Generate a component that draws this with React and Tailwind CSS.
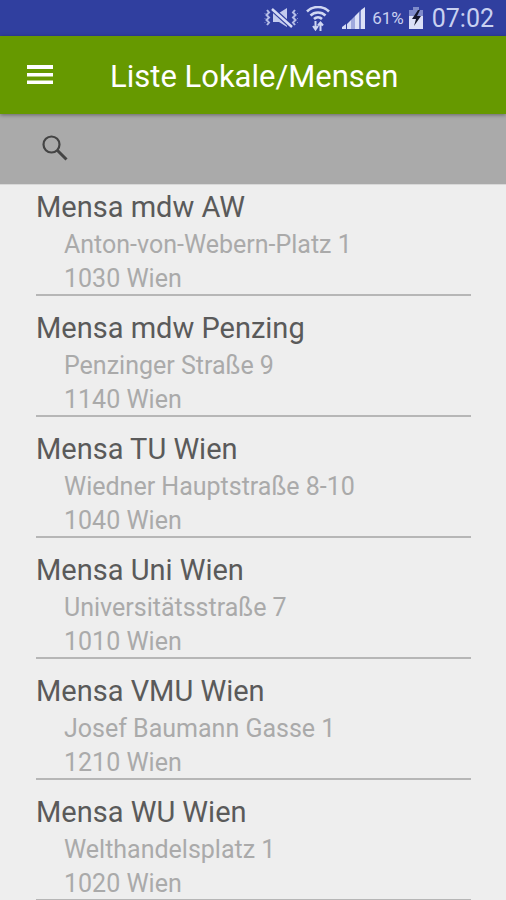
const places = [
  { name: 'Mensa mdw AW', street: 'Anton-von-Webern-Platz 1', city: '1030 Wien' },
  { name: 'Mensa mdw Penzing', street: 'Penzinger Straße 9', city: '1140 Wien' },
  { name: 'Mensa TU Wien', street: 'Wiedner Hauptstraße 8-10', city: '1040 Wien' },
  { name: 'Mensa Uni Wien', street: 'Universitätsstraße 7', city: '1010 Wien' },
  { name: 'Mensa VMU Wien', street: 'Josef Baumann Gasse 1', city: '1210 Wien' },
  { name: 'Mensa WU Wien', street: 'Welthandelsplatz 1', city: '1020 Wien' },
];

function MutedIcon() {
  return (
    <svg width="34" height="20" viewBox="0 0 34 20" fill="none" aria-hidden="true">
      <path d="M9 5h6l8-5v19l-8-5H9z" fill="#c3cbee" />
      <path d="M7 0l21 19" stroke="#303f9f" strokeWidth="5" />
      <path d="M8 1l20 18" stroke="#d5dbf5" strokeWidth="2.500" />
      <path d="M3 2l2 2.500L2.500 7 5 9.500 2.500 12 5 14.500 3 17M31 2l-2 2.500L31.500 7 29 9.500l2.500 2.500-2.500 2.500 2 2.500" stroke="#b4bde7" strokeWidth="2" />
      <path d="M1 5v1M1 10v1M1 14v1M33.500 5v1M33.500 10v1M33.500 14v1" stroke="#7f8bca" />
    </svg>
  );
}

function WifiIcon() {
  return (
    <svg width="24" height="25" viewBox="0 0 24 25" fill="none" stroke="#d0d7f3" aria-hidden="true">
      <path d="M1 5.500C7-.5 17-.5 23 5.500M4.500 9.500c4-4 11-4 15 0M8 13c2.300-2.200 5.700-2.200 8 0" strokeWidth="2.500" />
      <path d="M9.500 15v8M7 20l2.500 3.500L12 20M14.500 25v-8M12 19.500l2.500-3 2.500 3" strokeWidth="2" />
    </svg>
  );
}

function SignalIcon() {
  return (
    <svg width="24" height="22" viewBox="0 0 24 22" aria-hidden="true">
      <path d="M0 22v-2l4-3v5zM5 22v-5l4-4v9z" fill="#d5dbf5" />
      <path d="M9 22v-9l4-4v13z" fill="#9fa9de" />
      <path d="M13 22V9l4-4v17z" fill="#dce1f7" />
      <path d="M17 22V5l2-2v19z" fill="#7784c8" />
      <path d="M19 22V3l4-3v22z" fill="#dce1f7" />
    </svg>
  );
}

function BatteryIcon() {
  return (
    <svg width="16" height="22" viewBox="0 0 16 22" aria-hidden="true">
      <path d="M5 0h6v3h4v6H1V3h4z" fill="#7f8bca" />
      <path d="M1 9h14v13H1z" fill="#dce1f7" />
      <path d="M10 3L4 12h4l-2 7 7-10H9l3-6z" fill="#15172b" />
    </svg>
  );
}

export default function App() {
  return (
    <div className="min-h-screen bg-[#eeeeee] font-[Roboto,sans-serif]">
      <div className="flex h-9 items-center justify-end bg-[#303f9f] pr-3 text-[#c9d1f1]">
        <MutedIcon />
        <div className="ml-2 flex"><WifiIcon /></div>
        <div className="ml-3 flex"><SignalIcon /></div>
        <span className="ml-1.5 text-[17px] leading-9">61%</span>
        <div className="ml-1 flex"><BatteryIcon /></div>
        <time className="ml-2 pt-0.5 text-[25px] leading-9">07:02</time>
      </div>

      <header className="relative flex h-[78px] items-center bg-[#669900] pl-6 shadow-[0_1px_4px_rgba(0,0,0,0.4)]">
        <button type="button" aria-label="Menü" className="flex size-8 items-center justify-center text-white">
          <svg width="28" height="20" viewBox="0 0 28 20" fill="currentColor" aria-hidden="true">
            <path d="M1 0h26v4H1zM1 8h26v3.500H1zM1 15.500h26v3.500H1z" />
          </svg>
        </button>
        <h1 className="ml-[54px] pt-1 text-[31px] leading-9 text-white">Liste Lokale/Mensen</h1>
      </header>

      <form role="search" className="flex h-[71px] items-center gap-4 border-b border-[#d8d8d8] bg-[#aaaaaa] px-9">
        <label htmlFor="search" aria-label="Suche">
          <svg width="36" height="36" viewBox="0 0 36 36" fill="none" stroke="#444444" aria-hidden="true">
            <circle cx="15.500" cy="13.500" r="8" strokeWidth="2.200" />
            <path d="M21 19l9.500 9.500" strokeWidth="3" />
          </svg>
        </label>
        <input id="search" type="text" className="h-10 min-w-0 flex-1 bg-transparent text-[25px] text-[#444444] outline-none" />
      </form>

      <ul className="flex flex-col gap-2.5 pr-[35px] pl-9">
        {places.map((place) => (
          <li key={place.name} className="border-b-2 border-[#b6b6b6]">
            <h2 className="h-[43px] text-[29px] leading-[45px] text-[#5a5a5a]">{place.name}</h2>
            <address className="h-[66px] pl-7 text-[25px] leading-[34px] text-[#aaaaaa] not-italic">
              <p>{place.street}</p>
              <p>{place.city}</p>
            </address>
          </li>
        ))}
      </ul>
    </div>
  );
}
